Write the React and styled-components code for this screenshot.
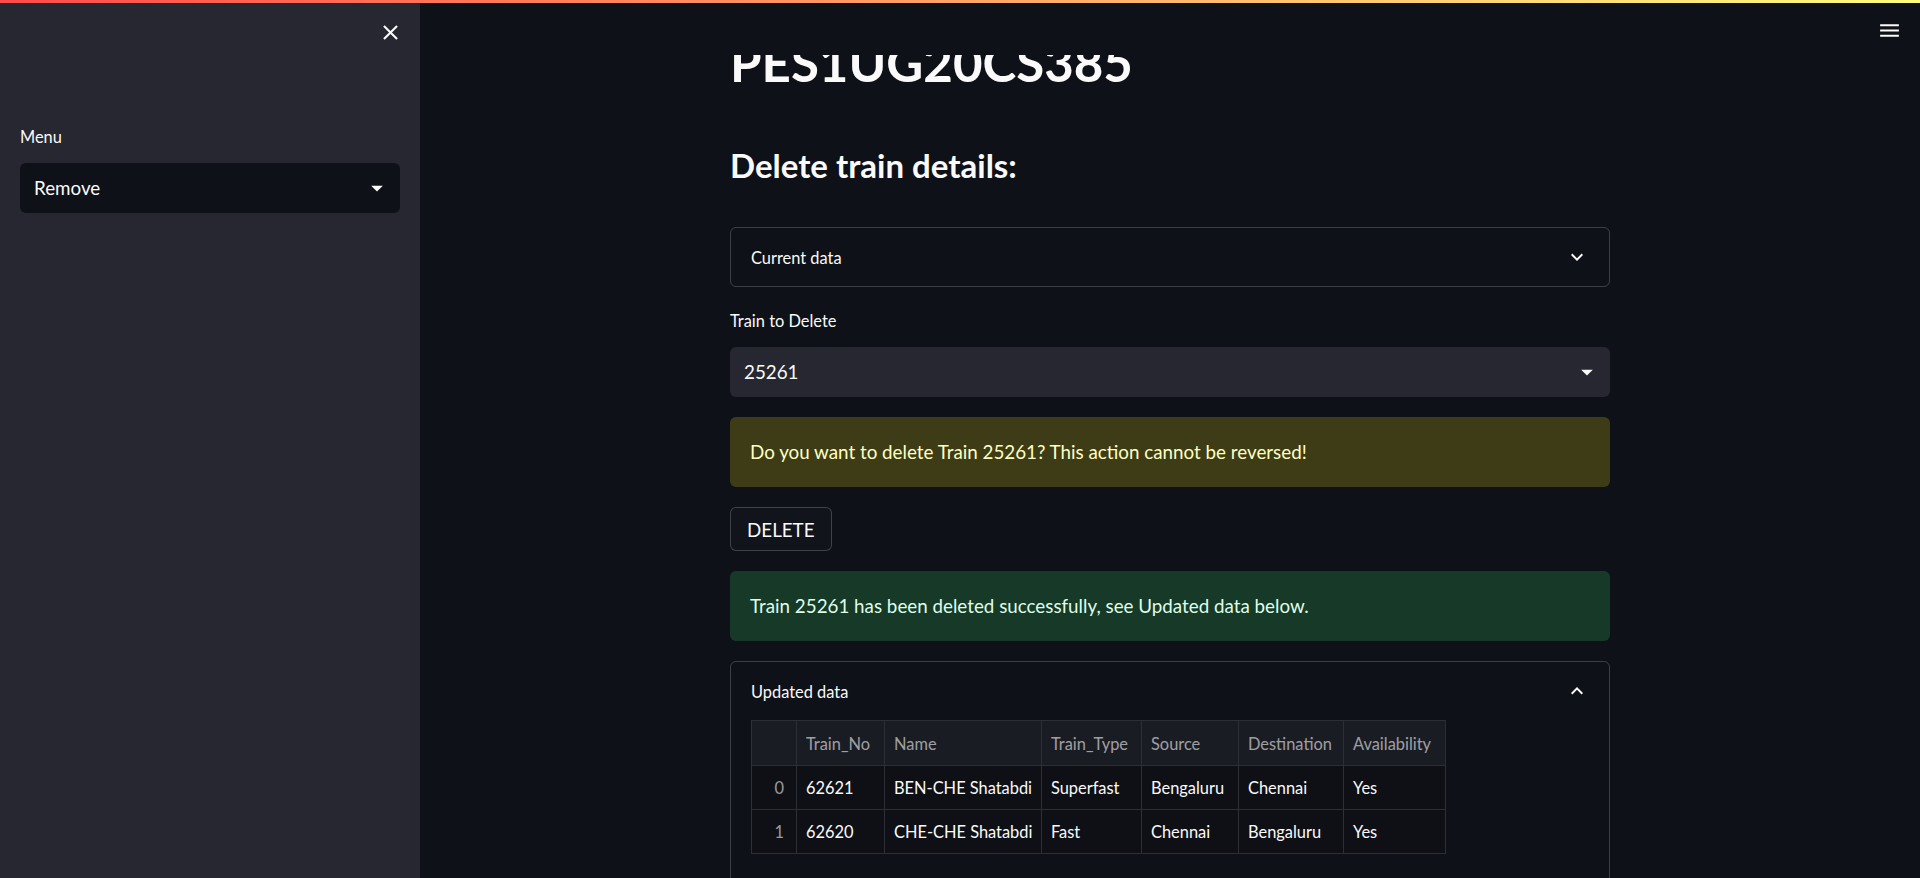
import styled, { createGlobalStyle } from "styled-components"

const GlobalStyle = createGlobalStyle`
    html, body {
        margin: 0;
        padding: 0;
        background-color: #0e1117;
        color: #fafafa;
        font-family: "Lato", "Liberation Sans", sans-serif;
        overflow: hidden;
    }
    * {
        box-sizing: border-box;
    }
`

const rows = [
    { idx: 0, no: "62621", name: "BEN-CHE Shatabdi", type: "Superfast", src: "Bengaluru", dest: "Chennai", avail: "Yes" },
    { idx: 1, no: "62620", name: "CHE-CHE Shatabdi", type: "Fast", src: "Chennai", dest: "Bengaluru", avail: "Yes" },
]

const columns = [
    { key: "idx", label: "", width: 45 },
    { key: "no", label: "Train_No", width: 88 },
    { key: "name", label: "Name", width: 157 },
    { key: "type", label: "Train_Type", width: 100 },
    { key: "src", label: "Source", width: 97 },
    { key: "dest", label: "Destination", width: 105 },
    { key: "avail", label: "Availability", width: 102 },
]

function CloseIcon() {
    return (
        <svg width="25" height="25" viewBox="0 0 24 24" fill="#fafafa">
            <path d="M19 6.41L17.59 5 12 10.59 6.41 5 5 6.41 10.59 12 5 17.59 6.41 19 12 13.41 17.59 19 19 17.59 13.41 12z" />
        </svg>
    )
}

function MenuIcon() {
    return (
        <svg width="25" height="25" viewBox="0 0 24 24" fill="#fafafa">
            <path d="M3 18h18v-2H3v2zm0-5h18v-2H3v2zm0-7v2h18V6H3z" />
        </svg>
    )
}

function Caret() {
    return (
        <svg width="28" height="28" viewBox="0 0 24 24" fill="#fafafa">
            <path d="M7 10l5 5 5-5z" />
        </svg>
    )
}

function Chevron({ up }) {
    return (
        <svg width="24" height="24" viewBox="0 0 24 24" fill="#fafafa">
            {up
                ? <path d="M12 8l-6 6 1.41 1.41L12 10.83l4.59 4.58L18 14z" />
                : <path d="M16.59 8.59L12 13.17 7.41 8.59 6 10l6 6 6-6z" />}
        </svg>
    )
}

function SelectBox({ value, dark }) {
    return (
        <Select dark={dark}>
            <span>{value}</span>
            <Caret />
        </Select>
    )
}

function DataTable() {
    const total = columns.reduce((sum, col) => sum + col.width, 0)
    return (
        <Table style={{ width: total }}>
            <colgroup>
                {columns.map(col => <col key={col.key} style={{ width: col.width }} />)}
            </colgroup>
            <thead>
                <tr>
                    {columns.map(col => <Th key={col.key}>{col.label}</Th>)}
                </tr>
            </thead>
            <tbody>
                {rows.map(row => (
                    <tr key={row.idx}>
                        {columns.map(col => (
                            <Td key={col.key} index={col.key === "idx"}>{row[col.key]}</Td>
                        ))}
                    </tr>
                ))}
            </tbody>
        </Table>
    )
}

export default function App() {
    return (
        <>
            <GlobalStyle />
            <Decoration />
            <Page>
                <Sidebar>
                    <CloseRow>
                        <IconButton><CloseIcon /></IconButton>
                    </CloseRow>
                    <SidebarContent>
                        <Label>Menu</Label>
                        <SelectBox value="Remove" dark />
                    </SidebarContent>
                </Sidebar>
                <Main>
                    <Header>
                        <IconButton><MenuIcon /></IconButton>
                    </Header>
                    <Block>
                        <Title>PES1UG20CS385</Title>
                        <Subtitle>Delete train details:</Subtitle>
                        <Expander>
                            <ExpanderHeader>
                                <span>Current data</span>
                                <Chevron />
                            </ExpanderHeader>
                        </Expander>
                        <div>
                            <Label>Train to Delete</Label>
                            <SelectBox value="25261" />
                        </div>
                        <Alert kind="warning">Do you want to delete Train 25261? This action cannot be reversed!</Alert>
                        <div>
                            <Button>DELETE</Button>
                        </div>
                        <Alert kind="success">Train 25261 has been deleted successfully, see Updated data below.</Alert>
                        <Expander open>
                            <ExpanderHeader>
                                <span>Updated data</span>
                                <Chevron up />
                            </ExpanderHeader>
                            <ExpanderBody>
                                <DataTable />
                            </ExpanderBody>
                        </Expander>
                    </Block>
                </Main>
            </Page>
        </>
    )
}

const Decoration = styled.div`
    position: fixed;
    top: 0;
    left: 0;
    right: 0;
    height: 3px;
    z-index: 10;
    background-image: linear-gradient(90deg, #ff4b4b, #fffd80);
`

const Page = styled.div`
    display: flex;
    width: 100vw;
    height: 100vh;
`

const Sidebar = styled.section`
    width: 420px;
    flex-shrink: 0;
    height: 100%;
    background-color: #262730;
    display: flex;
    flex-direction: column;
`

const CloseRow = styled.div`
    height: 64px;
    display: flex;
    justify-content: flex-end;
    align-items: center;
    padding-right: 17px;
`

const IconButton = styled.div`
    width: 25px;
    height: 25px;
    display: flex;
    justify-content: center;
    align-items: center;
    cursor: pointer;

    svg {
        display: block;
    }
`

const SidebarContent = styled.div`
    padding: 59px 20px 0 20px;
`

const Label = styled.div`
    font-size: 16.4px;
    line-height: 28px;
    margin-bottom: 12px;
    color: #fafafa;
`

const Select = styled.div`
    height: 50px;
    border-radius: 6px;
    background-color: ${props => props.dark ? "#0e1117" : "#262730"};
    display: flex;
    justify-content: space-between;
    align-items: center;
    padding: 0 9px 1px 14px;
    font-size: 18.8px;
    color: #fafafa;

    svg {
        display: block;
    }
`

const Main = styled.main`
    flex: 1;
    height: 100%;
    position: relative;
    overflow: hidden;
`

const Header = styled.header`
    position: absolute;
    top: 0;
    left: 0;
    right: 0;
    height: 55px;
    background-color: #0e1117;
    z-index: 5;
    display: flex;
    justify-content: flex-end;
    align-items: center;
    padding: 6px 18px 0 0;
`

const Block = styled.div`
    width: 880px;
    margin: 0 auto;
    padding-top: 30px;
    display: flex;
    flex-direction: column;
    gap: 20px;
`

const Title = styled.h1`
    margin: 0;
    font-size: 51px;
    font-weight: 700;
    line-height: 66px;
    color: #fafafa;
`

const Subtitle = styled.h3`
    margin: 0;
    padding: 28px 0 21px 0;
    font-size: 33px;
    font-weight: 700;
    line-height: 42px;
    color: #fafafa;
`

const Expander = styled.div`
    border: 1px solid rgba(250, 250, 250, 0.2);
    border-radius: 6px;
    ${props => props.open && "height: 400px;"}
`

const ExpanderHeader = styled.div`
    height: 58px;
    display: flex;
    justify-content: space-between;
    align-items: center;
    padding: 0 20px 0 20px;
    font-size: 16.4px;
    color: #fafafa;

    svg {
        display: block;
    }
`

const ExpanderBody = styled.div`
    padding: 0 20px 20px 20px;
`

const alertColors = {
    warning: { bg: "#3e3c17", fg: "#ffffc2" },
    success: { bg: "#173a28", fg: "#dffde9" },
}

const Alert = styled.div`
    padding: 20px;
    border-radius: 6px;
    font-size: 18.8px;
    line-height: 30px;
    background-color: ${props => alertColors[props.kind].bg};
    color: ${props => alertColors[props.kind].fg};
`

const Button = styled.button`
    height: 44px;
    padding: 0 16px;
    border: 1px solid rgba(250, 250, 250, 0.2);
    border-radius: 6px;
    background-color: #11141b;
    color: #fafafa;
    font-family: inherit;
    font-size: 18.8px;
    cursor: pointer;
`

const Table = styled.table`
    border-collapse: collapse;
    font-size: 16.4px;
    table-layout: fixed;
    border: 1px solid #2d2f36;
`

const Th = styled.th`
    height: 45px;
    padding: 0 9px;
    text-align: left;
    font-weight: 400;
    background-color: #1a1c23;
    color: rgba(250, 250, 250, 0.6);
    border: 1px solid #2d2f36;
    white-space: nowrap;
    overflow: hidden;
`

const Td = styled.td`
    height: 44px;
    padding: 0 ${props => props.index ? "12px" : "9px"};
    text-align: ${props => props.index ? "right" : "left"};
    background-color: #0e1016;
    color: ${props => props.index ? "rgba(250, 250, 250, 0.6)" : "#fafafa"};
    border: 1px solid #2d2f36;
    white-space: nowrap;
    overflow: hidden;
`
